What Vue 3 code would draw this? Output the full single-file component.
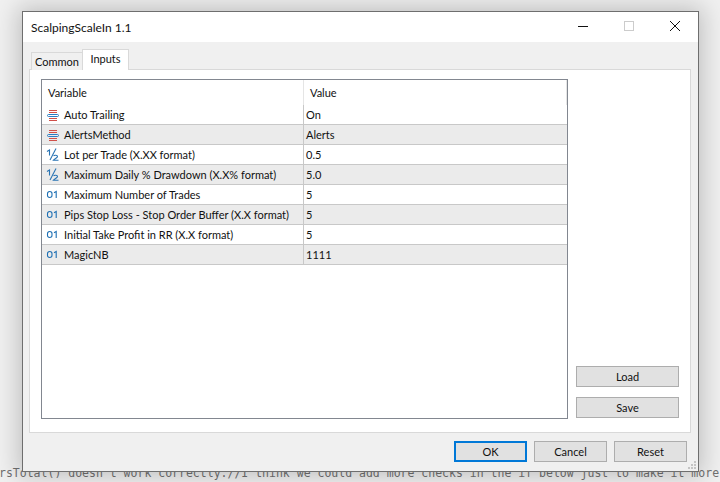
<script setup>
const rows = [
  { icon: 'enum', name: 'Auto Trailing', value: 'On' },
  { icon: 'enum', name: 'AlertsMethod', value: 'Alerts' },
  { icon: 'half', name: 'Lot per Trade (X.XX format)', value: '0.5' },
  { icon: 'half', name: 'Maximum Daily % Drawdown (X.X% format)', value: '5.0' },
  { icon: 'int', name: 'Maximum Number of Trades', value: '5' },
  { icon: 'int', name: 'Pips Stop Loss - Stop Order Buffer (X.X format)', value: '5' },
  { icon: 'int', name: 'Initial Take Profit in RR (X.X format)', value: '5' },
  { icon: 'int', name: 'MagicNB', value: '1111' },
]
</script>

<template>
  <div class="desktop">
    <div class="code">rsTotal() doesn't work correctly.//I think we could add more checks in the if below just to make it more</div>
    <div class="window">
      <div class="titlebar">
        <span class="title">ScalpingScaleIn 1.1</span>
        <div class="controls">
          <svg class="ctl" width="46" height="30" viewBox="0 0 46 30"><path d="M18 14.5h10" stroke="#111" fill="none"/></svg>
          <svg class="ctl" width="46" height="30" viewBox="0 0 46 30"><rect x="18.5" y="9.5" width="9" height="9" stroke="#ccc" fill="none"/></svg>
          <svg class="ctl" width="46" height="30" viewBox="0 0 46 30"><path d="M18 9l10 10M28 9L18 19" stroke="#111" fill="none"/></svg>
        </div>
      </div>
      <div class="body">
        <div class="tabs">
          <div class="tab">Common</div>
          <div class="tab active">Inputs</div>
        </div>
        <div class="panel">
          <div class="table">
            <div class="head">
              <div class="hcell var">Variable</div>
              <div class="hcell val">Value</div>
            </div>
            <div v-for="(r, i) in rows" :key="r.name" class="row" :class="{ odd: i % 2 === 1 }">
              <div class="cell var">
                <svg class="icon" width="14" height="13" viewBox="0 0 14 13">
                  <g v-if="r.icon === 'enum'" fill="none">
                    <path d="M3 2.5h8M3 4.5h8M3 10.5h8M3 12.5h8" stroke="#d0504a"/>
                    <rect x="1.5" y="6.5" width="11" height="2" rx="1" stroke="#2a7cc2"/>
                  </g>
                  <g v-else-if="r.icon === 'half'" fill="none" stroke="#2a74b4" stroke-width="1.1">
                    <path d="M1 3.5l2.5-1.5v5.5"/>
                    <path d="M10 .5L4 12"/>
                    <path d="M7.5 8c1-1.3 4-1 4 .6 0 1.3-2.5 2-4 3.6h5"/>
                  </g>
                  <g v-else fill="none" stroke="#1f70b4" stroke-width="1.1">
                    <rect x="1.5" y="3.5" width="4.5" height="6" rx="2.2"/>
                    <path d="M8 4.8l2.2-1.3v6.5"/>
                  </g>
                </svg>
                <span>{{ r.name }}</span>
              </div>
              <div class="cell val">{{ r.value }}</div>
            </div>
          </div>
          <div class="side">
            <button class="btn">Load</button>
            <button class="btn">Save</button>
          </div>
        </div>
        <div class="footer">
          <button class="btn small ok">OK</button>
          <button class="btn small">Cancel</button>
          <button class="btn small">Reset</button>
        </div>
      </div>
      <svg class="grip" width="10" height="10" viewBox="0 0 10 10" fill="#c4c4c4">
        <rect x="7" y="1" width="2" height="2"/><rect x="4" y="4" width="2" height="2"/><rect x="7" y="4" width="2" height="2"/>
        <rect x="1" y="7" width="2" height="2"/><rect x="4" y="7" width="2" height="2"/><rect x="7" y="7" width="2" height="2"/>
      </svg>
    </div>
  </div>
</template>

<style>
html, body { margin: 0; padding: 0; overflow: hidden; }
</style>

<style scoped>
.desktop {
  position: relative;
  width: 720px;
  height: 482px;
  overflow: hidden;
  background: #f0f0f0;
  font-family: Lato, Roboto, sans-serif;
  font-size: 11px;
  color: #111;
}
.code {
  position: absolute;
  left: -1px;
  top: 465px;
  white-space: nowrap;
  font-family: "DejaVu Sans Mono", monospace;
  font-size: 11.5px;
  line-height: 16px;
  color: #707070;
}
.window {
  position: absolute;
  left: 22px;
  top: 11px;
  width: 677px;
  height: 461px;
  box-sizing: border-box;
  border: 1px solid #6e6e6e;
  background: #f0f0f0;
  box-shadow: 0 0 22px 4px rgba(0, 0, 0, 0.2);
  display: flex;
  flex-direction: column;
}
.titlebar {
  height: 30px;
  background: #fff;
  display: flex;
  align-items: center;
  justify-content: space-between;
  flex: none;
}
.title { padding-left: 8px; font-size: 12px; }
.controls { display: flex; }
.ctl { display: block; }
.body {
  flex: 1;
  display: flex;
  flex-direction: column;
  padding: 8px 7px 0 6px;
  min-height: 0;
}
.tabs {
  display: flex;
  align-items: flex-end;
  height: 20px;
  padding-left: 2px;
  position: relative;
  z-index: 1;
  margin-bottom: -1px;
}
.tab {
  box-sizing: border-box;
  height: 18px;
  width: 52px;
  border: 1px solid #d9d9d9;
  border-bottom: 0;
  background: #f0f0f0;
  text-align: center;
  line-height: 18px;
}
.tab.active {
  height: 21px;
  width: 47px;
  background: #fff;
  border-width: 1px 1px 0 1px;
  line-height: 17px;
  margin-left: -1px;
}
.panel {
  box-sizing: border-box;
  height: 364px;
  background: #fff;
  border: 1px solid #d9d9d9;
  padding: 9px 11px 13px 11px;
  display: flex;
}
.table {
  box-sizing: border-box;
  width: 527px;
  border: 1px solid #828790;
  flex: none;
}
.head {
  display: flex;
  height: 25px;
  line-height: 25px;
}
.hcell.var { width: 262px; padding-left: 6px; box-sizing: border-box; border-right: 1px solid #e5e5e5; }
.hcell.val { padding-left: 6px; flex: 1; border-right: 1px solid #e5e5e5; }
.row {
  display: flex;
  height: 20px;
  box-sizing: border-box;
  border-bottom: 1px solid #c8c8c8;
  line-height: 20px;
}
.row.odd { background: #ebebeb; }
.cell.var {
  box-sizing: border-box;
  width: 262px;
  border-right: 1px solid #c8c8c8;
  display: flex;
  align-items: center;
  padding-left: 4px;
  gap: 4px;
  white-space: nowrap;
}
.icon { flex: none; }
.cell.val { padding-left: 2px; flex: 1; }
.side {
  flex: 1;
  display: flex;
  flex-direction: column;
  justify-content: flex-end;
  align-items: flex-end;
  gap: 10px;
  padding-bottom: 1px;
}
.btn {
  box-sizing: border-box;
  width: 103px;
  height: 21px;
  padding: 0;
  background: #e1e1e1;
  border: 1px solid #adadad;
  font: inherit;
  color: #111;
}
.footer {
  flex: 1;
  display: flex;
  justify-content: flex-end;
  align-items: flex-start;
  gap: 7px;
  padding: 8px 4px 0 0;
}
.btn.small { width: 73px; }
.btn.ok { border: 2px solid #0078d7; }
.grip { position: absolute; right: 1px; bottom: 1px; }
</style>
